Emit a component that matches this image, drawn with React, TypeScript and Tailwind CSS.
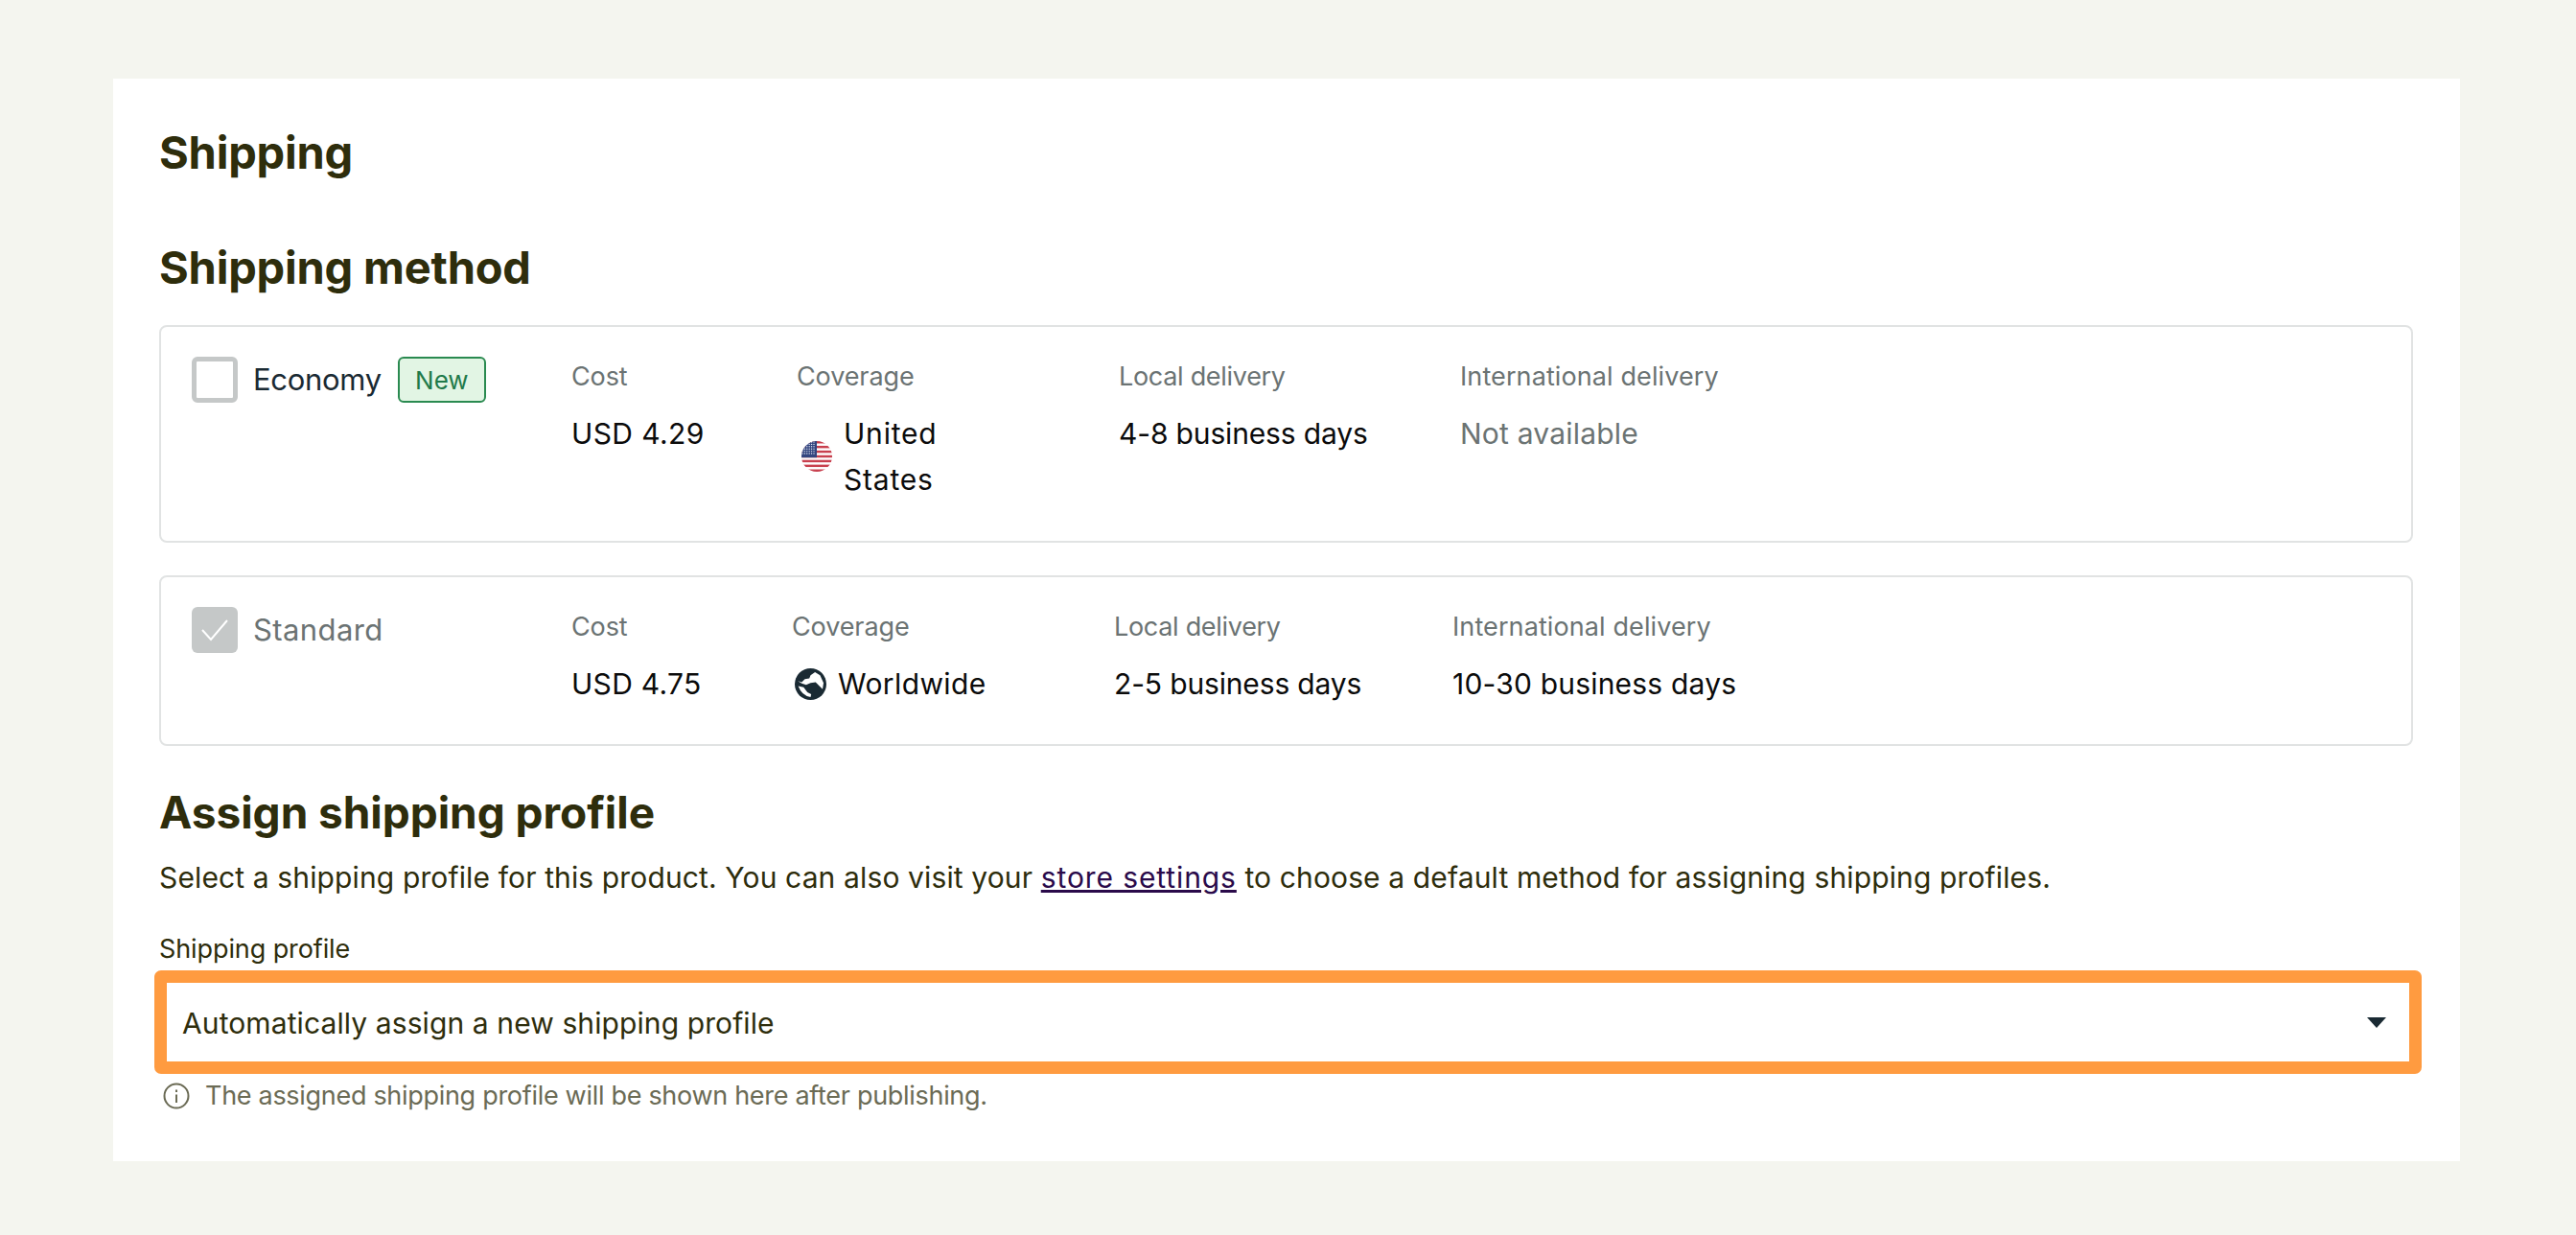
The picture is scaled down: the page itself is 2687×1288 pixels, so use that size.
import React from "react";

const font = "font-['Inter','Liberation_Sans',sans-serif]";

function UsFlag() {
  const stripes = [0, 2, 4, 6, 8, 10, 12];
  const stars: [number, number][] = [];
  for (let r = 0; r < 6; r++) for (let c = 0; c < 6; c++) stars.push([1 + c * 2.4, 1 + r * 2.4]);
  return (
    <svg width="32" height="32" viewBox="0 0 32 32" className="shrink-0">
      <defs>
        <clipPath id="flagclip"><circle cx="16" cy="16" r="16" /></clipPath>
      </defs>
      <g clipPath="url(#flagclip)">
        <rect width="32" height="32" fill="#fff" />
        {stripes.map((i) => (
          <rect key={i} x="0" y={i * 2.46} width="32" height="2.46" fill="#c8404e" />
        ))}
        <rect x="0" y="0" width="16" height="17.2" fill="#32457f" />
        {stars.map(([x, y], i) => (
          <circle key={i} cx={x} cy={y} r="0.7" fill="#dfe4f0" />
        ))}
      </g>
    </svg>
  );
}

function Globe() {
  return (
    <svg width="33" height="33" viewBox="0 0 100 100" className="shrink-0">
      <circle cx="50" cy="50" r="50" fill="#1a2a33" />
      <path d="M10 40L22 44L32 34L46 32L50 22L64 12L80 22L91 46L88 66L78 56L66 44L50 46L36 52L22 48Z" fill="#fff" />
      <path d="M11 56L28 60L40 76L52 82L50 91Q22 86 11 56Z" fill="#fff" />
    </svg>
  );
}

function Label({ children, className = "tracking-[-0.1px]" }: { children: React.ReactNode; className?: string }) {
  return <div className={`h-[40px] text-[27px] leading-[40px] text-[#6b7373] whitespace-nowrap ${className}`}>{children}</div>;
}

function Value({ children, muted, className = "tracking-[0.2px]" }: { children: React.ReactNode; muted?: boolean; className?: string }) {
  return (
    <div className={`mt-[15px] text-[30px] leading-[48px] whitespace-nowrap ${className} ${muted ? "text-[#6b7373]" : "text-[#0b0b0b]"}`}>
      {children}
    </div>
  );
}

export default function App() {
  return (
    <div className={`min-h-screen bg-[#f4f5ef] pt-[82px] pl-[118px] ${font}`}>
      <div className="flex h-[1129px] w-[2448px] flex-col bg-white pl-[48px] pr-[49px] pt-[49px] text-[#2e2d0c]">
        <h1 className="h-[56px] text-[47px] font-bold leading-[56px] tracking-[-0.2px]">Shipping</h1>
        <h2 className="mt-[64px] h-[56px] text-[47px] font-bold leading-[56px] tracking-[-0.2px]">Shipping method</h2>

        <div className="mt-[32px] flex h-[227px] rounded-[8px] border-2 border-[#e1e3e3] pl-[32px] pt-[31px]">
          <div className="flex w-[396px] shrink-0 items-start">
            <div className="h-[48px] w-[48px] rounded-[6px] border-[5px] border-[#c5c8c8] bg-white" />
            <span className="ml-[16px] text-[31px] leading-[48px] tracking-[-0.3px] text-[#1a2a33]">Economy</span>
            <span className="ml-[17px] flex h-[48px] w-[92px] items-center justify-center rounded-[6px] border-2 border-[#2a8a50] bg-[#e2f5e4] text-[26px] text-[#1f7a4a]">New</span>
          </div>
          <div className="w-[235px] shrink-0 mt-[1px]">
            <Label>Cost</Label>
            <Value className="tracking-[0.4px]">USD 4.29</Value>
          </div>
          <div className="w-[336px] shrink-0 mt-[1px]">
            <Label>Coverage</Label>
            <div className="mt-[15px] flex items-center text-[30px] leading-[48px] tracking-[0.8px] text-[#0b0b0b]">
              <span className="ml-[5px]"><UsFlag /></span>
              <span className="ml-[12px]">United<br />States</span>
            </div>
          </div>
          <div className="w-[356px] shrink-0 mt-[1px]">
            <Label className="tracking-[-0.3px]">Local delivery</Label>
            <Value className="tracking-[-0.15px]">4-8 business days</Value>
          </div>
          <div className="mt-[1px]">
            <Label className="tracking-[0.1px]">International delivery</Label>
            <Value className="tracking-[0.2px]" muted>Not available</Value>
          </div>
        </div>

        <div className="mt-[34px] flex h-[178px] rounded-[8px] border-2 border-[#e1e3e3] pl-[32px] pt-[31px]">
          <div className="flex w-[396px] shrink-0 items-start">
            <div className="flex h-[48px] w-[48px] items-center justify-center rounded-[6px] bg-[#c5c8c8]">
              <svg width="30" height="24" viewBox="0 0 30 24" fill="none" stroke="#fff" strokeWidth="2">
                <path d="M2 12l9 10L28 2" />
              </svg>
            </div>
            <span className="ml-[16px] text-[31px] leading-[48px] tracking-[0.4px] text-[#6b7373]">Standard</span>
          </div>
          <div className="w-[230px] shrink-0 mt-[1px]">
            <Label>Cost</Label>
            <Value className="tracking-[0.3px]">USD 4.75</Value>
          </div>
          <div className="w-[336px] shrink-0 mt-[1px]">
            <Label>Coverage</Label>
            <div className="mt-[15px] flex items-center text-[30px] leading-[48px] tracking-[0.4px] text-[#0b0b0b]">
              <span className="ml-[3px]"><Globe /></span>
              <span className="ml-[12px]">Worldwide</span>
            </div>
          </div>
          <div className="w-[353px] shrink-0 mt-[1px]">
            <Label className="tracking-[-0.3px]">Local delivery</Label>
            <Value className="tracking-[-0.15px]">2-5 business days</Value>
          </div>
          <div className="mt-[1px]">
            <Label className="tracking-[0.1px]">International delivery</Label>
            <Value>10-30 business days</Value>
          </div>
        </div>

        <h2 className="mt-[41px] h-[56px] text-[46px] font-bold leading-[56px] tracking-[-0.05px]">Assign shipping profile</h2>
        <p className="mt-[16px] h-[48px] text-[30px] leading-[48px] tracking-[0.13px] whitespace-nowrap">
          Select a shipping profile for this product. You can also visit your{" "}
          <span className="text-[#2a0a4a] underline tracking-[0.9px]">store settings</span> to choose a default method for assigning shipping profiles.
        </p>
        <div className="mt-[31px] h-[40px] text-[27px] leading-[40px] tracking-[-0.1px]">Shipping profile</div>
        <div className="mt-[2px] -ml-[5px] -mr-[9px] flex h-[108px] items-center justify-between rounded-[7px] border-[13px] border-[#ff9b40] bg-white pl-[16px] pr-[24px] text-[30px] tracking-[0.1px]">
          <span className="mt-[2px]">Automatically assign a new shipping profile</span>
          <svg width="20" height="11" viewBox="0 0 20 11"><path d="M0 0h20L10 11z" fill="#1a2a33" /></svg>
        </div>
        <div className="mt-[3px] flex h-[40px] items-center text-[27px] leading-[40px] tracking-[-0.3px] text-[#6b6b55]">
          <svg width="28" height="28" viewBox="0 0 28 28" fill="none" stroke="#6b6b55" strokeWidth="2" className="ml-[4px] shrink-0">
            <circle cx="14" cy="14" r="12.5" />
            <path d="M14 12.5V21M14 7.5v2.5" />
          </svg>
          <span className="ml-[16px]">The assigned shipping profile will be shown here after publishing.</span>
        </div>
      </div>
    </div>
  );
}
